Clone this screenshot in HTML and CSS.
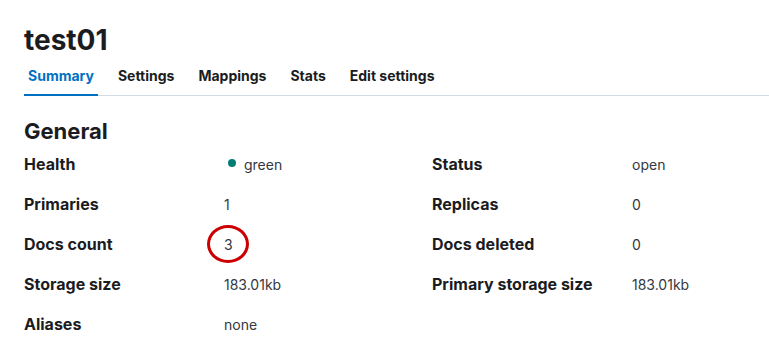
FILE: index.html
```html
<!DOCTYPE html>
<html lang="en">
<head>
    <meta charset="utf-8">
    <title>test01</title>
    <link rel="stylesheet" href="styles.css">
</head>
<body>
    <div class="page">
        <h1 class="indexTitle">test01</h1>
        <div class="tabs">
            <button class="tab selected">Summary</button>
            <button class="tab">Settings</button>
            <button class="tab">Mappings</button>
            <button class="tab">Stats</button>
            <button class="tab">Edit settings</button>
        </div>
        <h2 class="sectionTitle">General</h2>
        <div class="summaryGrid">
            <div class="label">Health</div>
            <div class="value"><span class="healthDot"></span>green</div>
            <div class="label">Status</div>
            <div class="value">open</div>

            <div class="label">Primaries</div>
            <div class="value">1</div>
            <div class="label">Replicas</div>
            <div class="value">0</div>

            <div class="label">Docs count</div>
            <div class="value marked">3<span class="circleMark"></span></div>
            <div class="label">Docs deleted</div>
            <div class="value">0</div>

            <div class="label">Storage size</div>
            <div class="value">183.01kb</div>
            <div class="label">Primary storage size</div>
            <div class="value">183.01kb</div>

            <div class="label">Aliases</div>
            <div class="value">none</div>
        </div>
    </div>
</body>
</html>
```

FILE: styles.css
```css
body {
    font-family: Inter, "Noto Sans", sans-serif;
    background-color: #fff;
    color: #1a1c21;
    margin: 0;
}
.page {
    padding: 24px 0 0 24px;
}
.indexTitle {
    font-size: 28px;
    font-weight: 700;
    line-height: 32px;
    margin: 0 0 1px 0;
}
.tabs {
    display: flex;
    gap: 16px;
    border-bottom: 1px solid #d3dae6;
}
.tab {
    font-family: inherit;
    font-size: 14px;
    font-weight: 700;
    color: #1a1c21;
    background: none;
    border: none;
    padding: 0 4px;
    height: 39px;
    line-height: 36px;
    margin-bottom: -1px;
    border-bottom: 2px solid transparent;
    cursor: pointer;
}
.tab.selected {
    color: #0071c2;
    border-bottom-color: #0071c2;
}
.sectionTitle {
    font-size: 22px;
    font-weight: 700;
    line-height: 28px;
    margin: 21px 0 0 0;
}
.summaryGrid {
    display: grid;
    grid-template-columns: 200px 208px 200px 120px;
    grid-auto-rows: 40px;
    align-items: center;
    margin-top: -1px;
}
.label {
    font-size: 16px;
    font-weight: 700;
}
.value {
    font-size: 14px;
    color: #343741;
    display: flex;
    align-items: center;
}
.healthDot {
    width: 8px;
    height: 8px;
    border-radius: 50%;
    background-color: #017d73;
    margin: 0 8px 2px 4px;
}
.marked {
    position: relative;
}
.circleMark {
    position: absolute;
    box-sizing: border-box;
    left: -17px;
    top: 50%;
    margin-top: -19px;
    width: 42px;
    height: 38px;
    border: 3px solid #cc0000;
    border-radius: 50%;
}
```
